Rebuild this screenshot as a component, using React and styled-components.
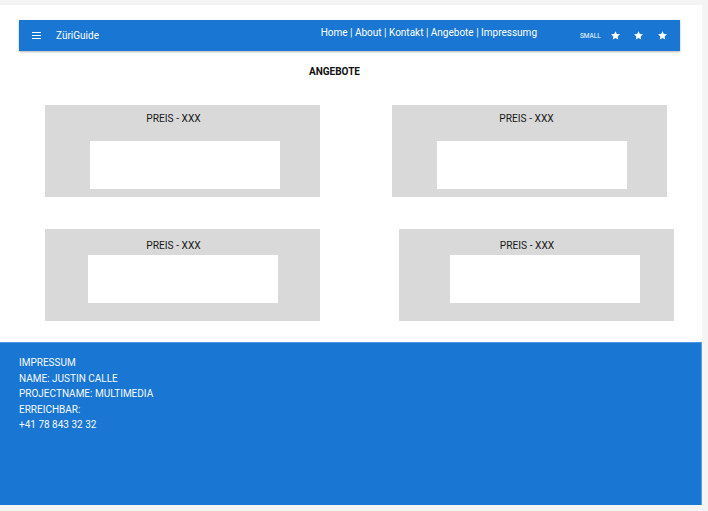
import React from 'react'
import styled, { createGlobalStyle } from 'styled-components'

const GlobalStyle = createGlobalStyle`
    body {
        margin: 0;
        background: #f4f4f4;
        font-family: Roboto, 'Liberation Sans', sans-serif;
    }
`

const Page = styled.div`
    width: 702px;
    padding-top: 5px;
    padding-bottom: 5px;
`

const Main = styled.main`
    background: #ffffff;
    padding: 15px 22px 21px 19px;
`

const Bar = styled.header`
    display: flex;
    align-items: center;
    height: 31px;
    background: #1976d2;
    color: #ffffff;
    box-shadow: 0 1px 2px rgba(0, 0, 0, 0.3);
    padding: 0 0 0 13px;
`

const Burger = styled.div`
    display: flex;
    flex-direction: column;
    gap: 2px;
    width: 9px;
    margin-right: 15px;

    span {
        height: 1.3px;
        background: #ffffff;
    }
`

const Brand = styled.div`
    font-size: 10px;
    flex: 1;
`

const Nav = styled.nav`
    font-size: 10px;
    align-self: flex-start;
    margin-top: 7px;
    margin-right: 43px;
    white-space: nowrap;
`

const Tools = styled.div`
    display: flex;
    align-items: center;
    width: 100px;
`

const Small = styled.span`
    font-size: 6.5px;
`

const Star = styled.svg`
    width: 11px;
    height: 11px;
    margin-left: 9px;
    fill: #ffffff;

    & + & {
        margin-left: 12.5px;
    }
`

const Heading = styled.h1`
    margin: 15px 30px 0 0;
    text-align: center;
    font-size: 10px;
    font-weight: 700;
    color: #111;
`

const Grid = styled.div`
    display: flex;
    flex-direction: column;
    gap: 32px;
    margin-top: 28px;
`

const Row = styled.div`
    display: flex;
`

const Card = styled.div`
    width: 275px;
    height: 92px;
    background: #d9d9d9;
    margin-left: ${p => p.offset}px;
    display: flex;
    flex-direction: column;
    align-items: center;
`

const Price = styled.div`
    font-size: 10.2px;
    color: #1a1a1a;
    margin-top: ${p => p.top}px;
    margin-left: ${p => p.shift}px;
`

const Slot = styled.div`
    width: 190px;
    height: 48px;
    background: #ffffff;
    margin-top: ${p => p.gap}px;
    margin-left: ${p => p.shift}px;
`

const Footer = styled.footer`
    height: 163px;
    background: #1976d2;
    border-top: 1px solid #4d95de;
    border-right: 1px solid #5b9de2;
    padding: 12px 19px 0;
    color: #f6f9fd;
    font-size: 10px;
    line-height: 15.6px;
    box-sizing: border-box;
`

function StarIcon() {
    return (
        <Star viewBox="0 0 24 24">
            <path d="M12 2.5l2.9 6.3 6.9.7-5.2 4.6 1.5 6.8L12 17.4l-6.1 3.5 1.5-6.8-5.2-4.6 6.9-.7z" />
        </Star>
    )
}

const cards = [
    [
        { offset: 26, top: 8, label: -18, gap: 17, shift: 5 },
        { offset: 72, top: 8, label: -6, gap: 17, shift: 5 },
    ],
    [
        { offset: 26, top: 11, label: -18, gap: 4, shift: 1 },
        { offset: 79, top: 11, label: -19, gap: 4, shift: 17 },
    ],
]

export default function App() {
    return (
        <Page>
            <GlobalStyle />
            <Main>
                <Bar>
                    <Burger>
                        <span />
                        <span />
                        <span />
                    </Burger>
                    <Brand>ZüriGuide</Brand>
                    <Nav>Home | About | Kontakt | Angebote | Impressumg</Nav>
                    <Tools>
                        <Small>SMALL</Small>
                        <StarIcon />
                        <StarIcon />
                        <StarIcon />
                    </Tools>
                </Bar>
                <Heading>ANGEBOTE</Heading>
                <Grid>
                    {cards.map((row, i) => (
                        <Row key={i}>
                            {row.map((c, j) => (
                                <Card key={j} offset={c.offset}>
                                    <Price top={c.top} shift={c.label}>PREIS - XXX</Price>
                                    <Slot gap={c.gap} shift={c.shift} />
                                </Card>
                            ))}
                        </Row>
                    ))}
                </Grid>
            </Main>
            <Footer>
                IMPRESSUM
                <br />
                NAME: JUSTIN CALLE
                <br />
                PROJECTNAME: MULTIMEDIA
                <br />
                ERREICHBAR:
                <br />
                +41 78 843 32 32
            </Footer>
        </Page>
    )
}
